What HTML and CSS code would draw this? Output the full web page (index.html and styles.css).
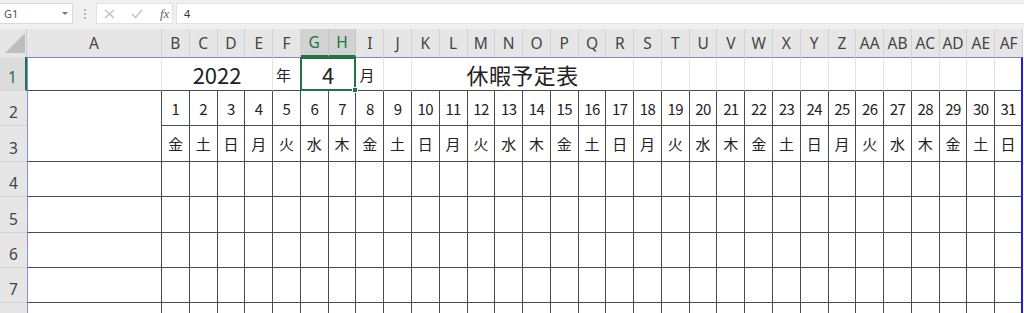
FILE: index.html
```html
<!DOCTYPE html>
<html lang="ja">

<head>
    <title>休暇予定表</title>
    <link rel="stylesheet" href="styles.css">
</head>

<body>
    <!-- Formula bar -->
    <div class="formula-bar">
        <div class="name-box">
            <span>G1</span>
            <svg class="name-arrow" width="6" height="4" viewBox="0 0 6 4"><path d="M0 0 L6 0 L3 3 Z" fill="#777"/></svg>
        </div>
        <div class="bar-dots"><span></span><span></span><span></span></div>
        <div class="bar-buttons">
            <svg width="11" height="10" viewBox="0 0 11 10"><path d="M1 1 L10 9 M10 1 L1 9" stroke="#bdbdbd" stroke-width="1.2" fill="none"/></svg>
            <svg width="12" height="10" viewBox="0 0 12 10"><path d="M1 5 L4.5 8.5 L11 1" stroke="#bdbdbd" stroke-width="1.2" fill="none"/></svg>
            <span class="btn-fx">fx</span>
        </div>
        <div class="formula-input">4</div>
    </div>

    <!-- Worksheet grid, filled by the script below -->
    <div class="sheet" id="Sheet"></div>

    <script>
        const sheet = document.getElementById("Sheet");
        const weekdays = ["金", "土", "日", "月", "火", "水", "木"];

        // Column letters A .. AF
        const letters = [];
        for (let i = 0; i < 32; i++) {
            letters.push(i < 26 ? String.fromCharCode(65 + i) : "A" + String.fromCharCode(65 + i - 26));
        }

        function addCell(className, text, span) {
            const div = document.createElement("div");
            div.className = className;
            if (text !== undefined && text !== "") {
                const label = document.createElement("span");
                label.textContent = text;
                div.appendChild(label);
            }
            if (span) {
                div.style.gridColumn = "span " + span;
            }
            sheet.appendChild(div);
            return div;
        }

        // Header row
        const corner = addCell("corner");
        corner.innerHTML = '<svg width="27" height="28" viewBox="0 0 27 28"><path d="M5 24 L25 4 L25 24 Z" fill="#bdbdbd"/></svg>';
        letters.forEach(letter => {
            const selected = letter === "G" || letter === "H";
            addCell("col-head" + (selected ? " selected" : ""), letter);
        });

        // Row 1: title row
        addCell("row-head selected", "1");
        addCell("cell top-row first-col");
        addCell("cell top-row big", "2022", 4);
        addCell("cell top-row small left", "年");
        addCell("cell top-row big active", "4", 2);
        addCell("cell top-row small left", "月");
        addCell("cell top-row");
        addCell("cell top-row title", "休暇予定表", 8);
        for (let i = 0; i < 14; i++) {
            addCell("cell top-row" + (i === 13 ? " last-col" : ""));
        }

        // Row 2: day numbers (A2:A3 merged)
        addCell("row-head", "2");
        const nameCell = addCell("cell table first-col");
        nameCell.style.gridRow = "span 2";
        for (let d = 1; d <= 31; d++) {
            addCell("cell table num" + (d === 31 ? " last-col" : ""), String(d));
        }

        // Row 3: weekdays
        addCell("row-head", "3");
        for (let d = 0; d < 31; d++) {
            addCell("cell table week" + (d === 30 ? " last-col" : ""), weekdays[d % 7]);
        }

        // Rows 4 .. 8: empty schedule rows (row 8 is cut off by the window)
        for (let r = 4; r <= 8; r++) {
            const cut = r === 8 ? " cut" : "";
            addCell("row-head" + cut, r === 8 ? "" : String(r));
            addCell("cell table first-col" + cut);
            for (let d = 0; d < 31; d++) {
                addCell("cell table" + cut + (d === 30 ? " last-col" : ""));
            }
        }
    </script>
</body>

</html>
```

FILE: styles.css
```css
body {
    margin: 0;
    width: 1024px;
    height: 313px;
    overflow: hidden;
    background-color: #ffffff;
    font-family: "Noto Sans", "Noto Sans CJK JP", sans-serif;
}

/* ---------- Formula bar ---------- */

.formula-bar {
    display: flex;
    align-items: flex-start;
    height: 29px;
    padding-top: 3px;
    box-sizing: border-box;
    background-color: #f0f0f0;
}

.name-box {
    display: flex;
    align-items: center;
    justify-content: space-between;
    width: 73px;
    height: 21px;
    padding: 0 4px 0 4px;
    box-sizing: border-box;
    background-color: #ffffff;
    border: 1px solid #dadada;
    border-left: none;
    font-size: 11px;
    color: #555;
}

.name-arrow {
    margin-top: 1px;
}

.bar-dots {
    display: flex;
    flex-direction: column;
    gap: 2px;
    width: 23px;
    align-items: center;
    padding-top: 6px;
}

.bar-dots span {
    width: 2px;
    height: 2px;
    background-color: #b4b4b4;
}

.bar-buttons {
    display: flex;
    align-items: center;
    gap: 16px;
    width: 77px;
    height: 21px;
    padding-left: 7px;
    box-sizing: border-box;
    background-color: #ffffff;
    border: 1px solid #e2e2e2;
}

.btn-fx {
    font-family: "Liberation Serif", serif;
    font-style: italic;
    font-size: 13px;
    color: #666;
    margin-left: 1px;
}

.formula-input {
    flex: 1;
    height: 21px;
    margin-left: 3px;
    padding-left: 7px;
    box-sizing: border-box;
    background-color: #ffffff;
    border: 1px solid #e2e2e2;
    border-right: none;
    font-size: 11px;
    line-height: 19px;
    color: #333;
}

/* ---------- Worksheet ---------- */

.sheet {
    display: grid;
    width: 1023px;
    grid-template-columns: 27px 135px repeat(31, 1fr);
    grid-template-rows: 28px 34px 35px 36px 35px 36px 35px 35px 10px;
}

.corner {
    background-color: #e6e6e6;
    border-right: 1px solid #d0d0d0;
    box-sizing: border-box;
    line-height: 0;
}

.col-head {
    display: flex;
    align-items: center;
    justify-content: center;
    background-color: #e6e6e6;
    border-right: 1px solid #d2d2d2;
    box-sizing: border-box;
    font-size: 15.5px;
    color: #444;
}

.col-head:last-child {
    border-right: none;
}

.col-head.selected {
    background-color: #d2d2d2;
    color: #217346;
    border-bottom: 2px solid #217346;
    border-right-color: #c4c4c4;
}

.row-head {
    display: flex;
    align-items: flex-end;
    justify-content: center;
    padding-bottom: 5px;
    box-sizing: border-box;
    background-color: #e6e6e6;
    border-bottom: 1px solid #d4d4d4;
    font-size: 15.5px;
    line-height: 16px;
    color: #444;
}

.row-head.selected {
    background-color: #dcdcdc;
    color: #217346;
    border-right: 2px solid #217346;
}

.cell {
    display: flex;
    align-items: center;
    justify-content: center;
    box-sizing: border-box;
    min-width: 0;
    font-family: "Noto Sans CJK JP", sans-serif;
    color: #222;
    white-space: nowrap;
}

/* Title row: light gridlines, dark line under it */
.top-row {
    border-top: 1px solid #8282dc;
    border-right: 1px solid #e3e3e3;
    border-bottom: 1px solid #4a4a4a;
}

.table {
    border-right: 1px solid #4d4d4d;
    border-bottom: 1px solid #4d4d4d;
}

.first-col {
    border-left: 1px solid #8c8cf0;
}

.last-col {
    border-right: 2px solid #1e1ee6;
}

/* Partly visible last row */
.row-head.cut,
.table.cut {
    border-bottom: none;
}

.big {
    font-size: 22px;
}

.small {
    font-size: 15px;
}

.left {
    justify-content: flex-start;
    padding-left: 3px;
}

.title {
    font-size: 22px;
    letter-spacing: 0.4px;
}

.num {
    font-size: 15px;
    letter-spacing: -0.6px;
}

.week {
    font-size: 15px;
}

/* Selected merged cell G1:H1 */
.active {
    position: relative;
}

.active::after {
    content: "";
    position: absolute;
    top: -1px;
    left: -1px;
    right: -1px;
    bottom: -1px;
    border: 2px solid #217346;
}

.active::before {
    content: "";
    position: absolute;
    right: -3px;
    bottom: -3px;
    width: 4px;
    height: 4px;
    background-color: #217346;
    border: 1px solid #ffffff;
    z-index: 1;
}
```
